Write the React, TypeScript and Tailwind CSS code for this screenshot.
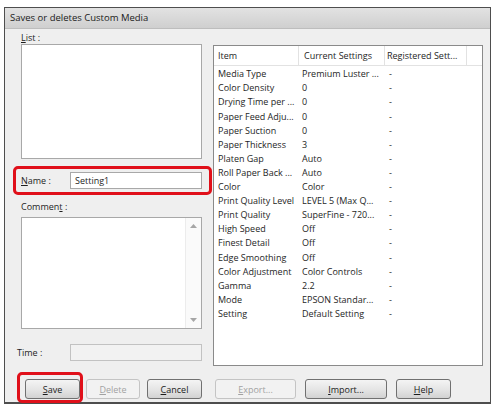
import React from 'react';

const rows: [string, string, string][] = [
  ['Media Type', 'Premium Luster ...', '-'],
  ['Color Density', '0', '-'],
  ['Drying Time per ...', '0', '-'],
  ['Paper Feed Adju...', '0', '-'],
  ['Paper Suction', '0', '-'],
  ['Paper Thickness', '3', '-'],
  ['Platen Gap', 'Auto', '-'],
  ['Roll Paper Back ...', 'Auto', '-'],
  ['Color', 'Color', '-'],
  ['Print Quality Level', 'LEVEL 5 (Max Q...', '-'],
  ['Print Quality', 'SuperFine - 720...', '-'],
  ['High Speed', 'Off', '-'],
  ['Finest Detail', 'Off', '-'],
  ['Edge Smoothing', 'Off', '-'],
  ['Color Adjustment', 'Color Controls', '-'],
  ['Gamma', '2.2', '-'],
  ['Mode', 'EPSON Standar...', '-'],
  ['Setting', 'Default Setting', '-'],
];

const Btn: React.FC<{ label: string; u: number; w: string; disabled?: boolean; className?: string }> = ({
  label,
  u,
  w,
  disabled,
  className = '',
}) => (
  <button
    type="button"
    className={`${w} h-[20px] rounded-[3px] border text-[9px] leading-none flex items-center justify-center ${
      disabled
        ? 'border-[#c4c4c4] bg-[#f2f2f2] text-[#a2a2a2]'
        : 'border-[#707070] bg-gradient-to-b from-[#f4f4f4] via-[#e6e6e6] to-[#d2d2d2] text-[#1c1c1c]'
    } ${className}`}
  >
    {label.slice(0, u)}
    <span className="underline">{label[u]}</span>
    {label.slice(u + 1)}
  </button>
);

export default function App() {
  return (
    <div className="w-[493px] h-[407px] bg-white pl-[4px] pt-[7px]" style={{ fontFamily: '"Open Sans", "Noto Sans", sans-serif' }}>
      <div className="w-[487px] h-[397px] border border-[#4e4e4e] border-b-[2px] bg-[#efefef] flex flex-col">
        <div className="h-[21px] bg-gradient-to-b from-[#e2e2e2] to-[#cfcfcf] border-b border-[#bdbdbd] pl-[5px] flex items-center text-[9.5px] text-[#1a1a1a]">
          Saves or deletes Custom Media
        </div>

        <div className="flex pl-[16px]">
          <div className="w-[181px] flex flex-col text-[9px] text-[#1e1e1e]">
            <div className="h-[15px] leading-[14px] pt-[2px]">
              <span className="underline">L</span>ist :
            </div>
            <div className="h-[115px] border border-[#a8a8a8] bg-white" />

            <div className="relative mt-[13px] h-[17px] flex items-center">
              <div className="w-[49px]">
                <span className="underline">N</span>ame :
              </div>
              <div className="w-[132px] h-[17px] border border-[#a8a8a8] bg-white pl-[4px] leading-[15px]">
                Setting1
              </div>
              <div className="absolute -left-[8px] -top-[6px] w-[199px] h-[29px] rounded-[5px] border-[3px] border-[#e0101a]" />
            </div>

            <div className="h-[28px] pt-[11px] leading-[14px]">
              Commen<span className="underline">t</span> :
            </div>
            <div className="h-[112px] border border-[#a8a8a8] bg-white flex justify-end">
              <div className="w-[16px] border-l border-[#ececec] bg-[#fafafa] flex flex-col items-center justify-between py-[6px]">
                <svg width="7" height="4" viewBox="0 0 7 4">
                  <path d="M0 4 L3.5 0 L7 4 Z" fill="#a6a6a6" />
                </svg>
                <svg width="7" height="4" viewBox="0 0 7 4">
                  <path d="M0 0 L3.5 4 L7 0 Z" fill="#a6a6a6" />
                </svg>
              </div>
            </div>

            <div className="mt-[15px] h-[17px] flex items-center">
              <div className="w-[49px] -ml-[4px] mr-[4px]">Time :</div>
              <div className="w-[132px] h-[17px] border border-[#c2c2c2] bg-[#f2f2f2]" />
            </div>
          </div>

          <div className="ml-[11px] mt-[16px] w-[270px] h-[321px] border border-[#8a8a8a] bg-white text-[9px] text-[#1e1e1e]">
            <div className="flex h-[20px] border-b border-[#e2e2e2] items-center">
              <div className="w-[85px] pl-[4px] h-full flex items-center border-r border-[#e2e2e2]">Item</div>
              <div className="w-[86px] pl-[5px] h-full flex items-center border-r border-[#e2e2e2]">Current Settings</div>
              <div className="w-[82px] pl-[2px] h-full flex items-center border-r border-[#e2e2e2]">Registered Sett...</div>
            </div>
            <div className="pt-[1px]">
              {rows.map(([a, b, c]) => (
                <div key={a} className="flex h-[14.1px] items-center">
                  <div className="w-[85px] pl-[4px] whitespace-nowrap">{a}</div>
                  <div className="w-[89px] pl-[3px] whitespace-nowrap">{b}</div>
                  <div className="pl-[1px]">{c}</div>
                </div>
              ))}
            </div>
          </div>
        </div>

        <div className="flex items-start mt-[13px] pl-[20px]">
          <div className="relative flex">
            <Btn label="Save" u={0} w="w-[55px]" />
            <div className="absolute -left-[8px] -top-[7px] w-[66px] h-[31px] rounded-[5px] border-[3px] border-[#e0101a]" />
          </div>
          <Btn label="Delete" u={0} w="w-[54px]" disabled className="ml-[6px]" />
          <Btn label="Cancel" u={0} w="w-[55px]" className="ml-[7px]" />
          <Btn label="Export..." u={0} w="w-[81px]" disabled className="ml-[13px]" />
          <Btn label="Import..." u={0} w="w-[82px]" className="ml-[9px]" />
          <Btn label="Help" u={0} w="w-[55px]" className="ml-[9px]" />
        </div>
      </div>
    </div>
  );
}
